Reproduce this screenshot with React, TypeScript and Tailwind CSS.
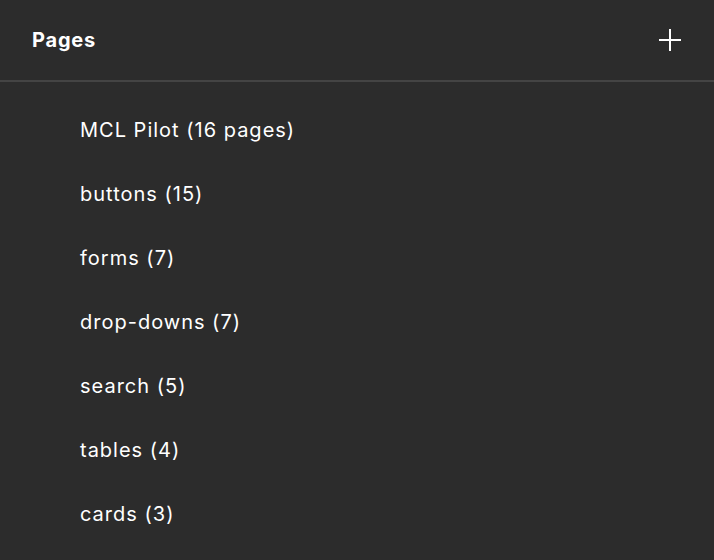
const pages = [
  'MCL Pilot (16 pages)',
  'buttons (15)',
  'forms (7)',
  'drop-downs (7)',
  'search (5)',
  'tables (4)',
  'cards (3)',
]

export default function App() {
  return (
    <div
      className="w-[714px] h-[560px] bg-[#2c2c2c] text-white overflow-hidden"
      style={{ fontFamily: 'Inter, "Noto Sans", sans-serif' }}
    >
      <div className="h-[82px] flex items-center justify-between pl-8 pr-[33px] border-b-2 border-[#444444]">
        <h1 className="text-[20px] font-bold tracking-[0.8px]">Pages</h1>
        <button aria-label="Add page" className="w-[22px] h-[22px]">
          <svg width="22" height="22" viewBox="0 0 22 22" fill="none" stroke="white" strokeWidth="2">
            <line x1="0" y1="11" x2="22" y2="11" />
            <line x1="11" y1="0" x2="11" y2="22" />
          </svg>
        </button>
      </div>
      <ul className="pt-4">
        {pages.map((p) => (
          <li key={p} className="h-16 flex items-center pl-20 text-[20px] tracking-[1px]">
            {p}
          </li>
        ))}
      </ul>
    </div>
  )
}
